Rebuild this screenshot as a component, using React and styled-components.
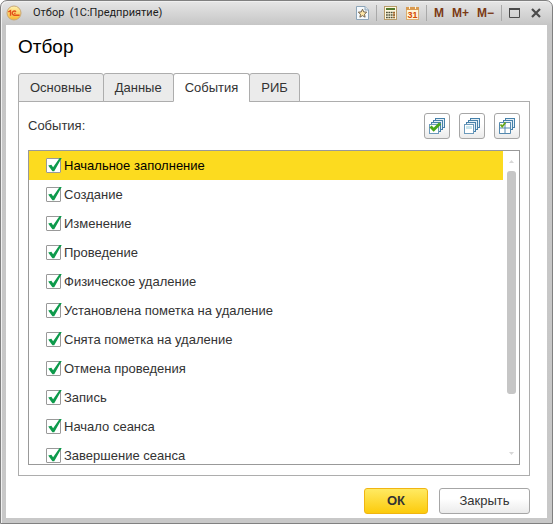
import React, { useState } from "react";
import styled, { createGlobalStyle, css } from "styled-components";

const GlobalStyle = createGlobalStyle`
  *, *::before, *::after { box-sizing: border-box; }
  body {
    margin: 0;
    background: #fff;
    color: #333;
    font: 13px/16px "Liberation Sans", Arial, sans-serif;
  }
  button, input { font: inherit; color: inherit; }
`;

const Window = styled.div`
  display: flex;
  flex-direction: column;
  height: 100vh;
  padding: 0 5px 5px;
  border: 1px solid #808080;
  border-radius: 7px 7px 0 0;
  background: linear-gradient(#e6e6e6, #c6c6c6 24px, #c8c8c8);
  box-shadow: inset 1px 1px 0 #f0f0f0;
`;

const TitleBar = styled.header`
  display: flex;
  flex: none;
  align-items: center;
  height: 24px;
`;

const WindowTitle = styled.span`
  flex: 1;
  margin-left: 11px;
  color: #1c1c1c;
  font: 11px/16px Roboto, sans-serif;
  white-space: pre;
`;

const ToolGroup = styled.div`
  display: flex;
  align-items: center;
  height: 16px;
  gap: ${(p) => p.$gap}px;
  padding: 0 7px;
  border-left: ${(p) => (p.$divided ? "1px solid #a9a9a9" : "0")};

  &:last-child { padding-right: 6px; }
`;

const TitleButton = styled.button`
  display: flex;
  align-items: center;
  justify-content: center;
  height: 16px;
  padding: 0;
  border: 0;
  background: none;
  color: #7b3a14;
  font: bold 12px/16px "Liberation Sans", Arial, sans-serif;
`;

const Content = styled.main`
  display: flex;
  flex: 1;
  flex-direction: column;
  min-height: 0;
  padding: 11px 17px 4px 12px;
  background: #fff;
`;

const Heading = styled.h1`
  margin: 0 0 15px;
  color: #000;
  font: 19px/22px "Liberation Sans", Arial, sans-serif;
`;

const Tabs = styled.div`
  display: flex;
  position: relative;
  z-index: 1;
`;

const Tab = styled.button`
  height: 29px;
  margin: 0 -1px -1px 0;
  padding: 0 11px;
  border: 1px solid #adadad;
  border-radius: 3px 3px 0 0;
  background: #ebebeb;

  ${(p) => p.$active && css`
    border-bottom-color: #fff;
    background: #fff;
  `}
`;

const Panel = styled.section`
  display: flex;
  flex: 1;
  flex-direction: column;
  min-height: 0;
  padding: 11px 9px 10px;
  border: 1px solid #adadad;
`;

const PanelBar = styled.div`
  display: flex;
  flex: none;
  align-items: center;
  justify-content: space-between;
  margin-bottom: 11px;
`;

const IconButtons = styled.div`
  display: flex;
  gap: 9px;
`;

const buttonFace = css`
  border: 1px solid #a6a6a6;
  border-radius: 3px;
  background: linear-gradient(#fff 40%, #ebebeb);
`;

const IconButton = styled.button`
  ${buttonFace}
  display: flex;
  align-items: center;
  justify-content: center;
  width: 26px;
  height: 26px;
  padding: 0;
`;

const ListBox = styled.div`
  display: flex;
  flex: 1;
  min-height: 0;
  border: 1px solid #999;
`;

const List = styled.ul`
  flex: 1;
  margin: 0;
  padding: 0;
  overflow-y: auto;
  scrollbar-width: none;
  list-style: none;
`;

const Row = styled.li`
  height: 29px;
  background: ${(p) => (p.$selected ? "#fcdb1f" : "#fff")};
  color: ${(p) => (p.$selected ? "#000" : "#333")};
`;

const RowLabel = styled.label`
  display: flex;
  align-items: center;
  gap: 3px;
  height: 29px;
  padding-left: 17px;
`;

const CheckFrame = styled.span`
  display: grid;
  width: 15px;
  height: 15px;

  > * { grid-area: 1 / 1; }
`;

const CheckBox = styled.input`
  width: 15px;
  height: 15px;
  margin: 0;
  border: 1px solid #999;
  border-radius: 1px;
  appearance: none;
  background: #fff;

  & + svg { visibility: hidden; overflow: visible; pointer-events: none; }
  &:checked + svg { visibility: visible; }
`;

const ScrollTrack = styled.div`
  display: flex;
  flex: none;
  flex-direction: column;
  align-items: center;
  width: 16px;
  padding: 8px 0;
`;

const ScrollThumb = styled.div`
  flex: 0 0 75%;
  width: 9px;
  margin: 8px 0 auto;
  border-radius: 3px;
  background: #c6c6c6;
`;

const Footer = styled.footer`
  display: flex;
  flex: none;
  justify-content: flex-end;
  gap: 11px;
  padding-top: 12px;
`;

const ActionButton = styled.button`
  ${buttonFace}
  width: 91px;
  height: 26px;
  padding: 0;

  ${(p) => p.$primary && css`
    width: 64px;
    border-color: #f0b512;
    background: linear-gradient(#ffea62, #fccb0c);
    font-weight: bold;
  `}
`;

const LogoIcon = () => (
  <svg width="16" height="16" viewBox="0 0 16 16" aria-hidden="true">
    <defs>
      <linearGradient id="logoFace" x1="0" y1="0" x2="0" y2="1">
        <stop offset="0" stopColor="#fff3b0" />
        <stop offset="1" stopColor="#f9b52c" />
      </linearGradient>
    </defs>
    <circle cx="8" cy="8" r="7" fill="url(#logoFace)" stroke="#c9a878" />
    <path d="M2.3 6.8 4.5 5.6V10.8M10 6.8A2.1 2.1 0 1 0 8.2 10.2H13.6M8.2 8.4H9.5" fill="none" stroke="#e2501b" strokeWidth="1.4" />
  </svg>
);

const FavoriteIcon = () => (
  <svg width="13" height="14" viewBox="0 0 13 14" aria-hidden="true">
    <path d="M.5.5H9L12.5 4V13.5H.5Z" fill="#f5f9fc" stroke="#8da5b8" />
    <path d="M9 .5V4H12.5" fill="#d9e6ef" stroke="#8da5b8" />
    <path d="m6.5 3.2 1.2 2.7 3 .3-2.2 2 .6 3-2.6-1.6-2.6 1.6.6-3-2.2-2 3-.3Z" fill="#ffe7a8" stroke="#75644c" />
  </svg>
);

const CalculatorIcon = () => (
  <svg width="13" height="14" viewBox="0 0 13 14" aria-hidden="true">
    <rect x=".5" y=".5" width="12" height="13" fill="#fff8df" stroke="#b79b6a" />
    <rect x="2" y="2" width="9" height="2" fill="#52792c" />
    <path d="M2 6.5h9M2 9h9M2 11.5h9" stroke="#4f5138" strokeWidth="1.4" strokeDasharray="1.8 .6" />
    <path d="M10 6v6" stroke="#bd6b26" strokeWidth="1.5" strokeDasharray="1.8 .7" />
  </svg>
);

const CalendarIcon = () => (
  <svg width="13" height="14" viewBox="0 0 13 14" aria-hidden="true">
    <rect x=".5" y="1.5" width="12" height="12" fill="#fff5d9" stroke="#d8ad74" />
    <path d="M0 2.5h13" stroke="#d99a50" strokeWidth="3" />
    <path d="M3.5 0v3M9.5 0v3" stroke="#fff2d5" />
    <text x="6.5" y="12" textAnchor="middle" fontFamily="Liberation Sans, sans-serif" fontSize="9" fill="#d64a03">31</text>
  </svg>
);

const MaximizeIcon = () => (
  <svg width="11" height="10" viewBox="0 0 11 10" aria-hidden="true">
    <path d="M.5 1v8.5h10V1" fill="none" stroke="#4a4a4a" />
    <path d="M0 1h11" stroke="#4a4a4a" strokeWidth="2" />
  </svg>
);

const CloseIcon = () => (
  <svg width="10" height="10" viewBox="0 0 10 10" aria-hidden="true">
    <path d="m1 1 8 8M9 1 1 9" stroke="#4a4a4a" strokeWidth="2.2" />
  </svg>
);

const SheetsIcon = ({ kind }) => (
  <svg width="16" height="16" viewBox="0 0 16 16" aria-hidden="true">
    <g fill="#e3eff6" stroke="#4580aa">
      <rect x="6.5" y=".5" width="9" height="9" />
      <rect x="4.5" y="2.5" width="9" height="9" />
      <rect x="2.5" y="4.5" width="9" height="9" />
      <rect x=".5" y="6.5" width="9" height="9" fill="#fff" stroke="#6c9abb" />
    </g>
    {kind === "check" && (
      <path d="m1.5 8.5 3.2 3.2L11 5.5" fill="none" stroke="#46a51a" strokeWidth="3" />
    )}
    {kind === "clear" && <path d="M2 8h6v3H2Z" fill="#c9e5ec" />}
    {kind === "invert" && (
      <>
        <path d="M.5 4.5h11v11H.5ZM6 4.5v11M.5 10h11" fill="#fff" stroke="#5489af" />
        <path d="m1.5 6.5 1.7 2L6.5 4.5" fill="none" stroke="#67a718" strokeWidth="1.8" />
      </>
    )}
  </svg>
);

const CheckMark = () => (
  <svg width="15" height="15" viewBox="0 0 15 15" aria-hidden="true">
    <path d="M2.2 7.4 5.4 6.8 7.1 9.2 13.6 0H15.7L8.2 13.2H6.4Z" fill="#0d9a4b" />
  </svg>
);

const Arrow = ({ down }) => (
  <svg width="5" height="4" viewBox="0 0 5 4" aria-hidden="true">
    <path d={down ? "M0 0h5L2.5 3Z" : "M0 4h5L2.5 1Z"} fill="#d7d7d7" />
  </svg>
);

const tabs = ["Основные", "Данные", "События", "РИБ"];
const events = [
  "Начальное заполнение",
  "Создание",
  "Изменение",
  "Проведение",
  "Физическое удаление",
  "Установлена пометка на удаление",
  "Снята пометка на удаление",
  "Отмена проведения",
  "Запись",
  "Начало сеанса",
  "Завершение сеанса",
];

export default function App() {
  const [activeTab, setActiveTab] = useState("События");
  const [checked, setChecked] = useState(() => events.map(() => true));

  const toggle = (index) =>
    setChecked((values) => values.map((value, i) => (i === index ? !value : value)));

  return (
    <>
      <GlobalStyle />
      <Window>
        <TitleBar>
          <LogoIcon />
          <WindowTitle>{"Отбор  (1С:Предприятие)"}</WindowTitle>
          <ToolGroup $gap={0}>
            <TitleButton aria-label="Избранное"><FavoriteIcon /></TitleButton>
          </ToolGroup>
          <ToolGroup $gap={9} $divided>
            <TitleButton aria-label="Калькулятор"><CalculatorIcon /></TitleButton>
            <TitleButton aria-label="Календарь"><CalendarIcon /></TitleButton>
          </ToolGroup>
          <ToolGroup $gap={8} $divided>
            <TitleButton>M</TitleButton>
            <TitleButton>M+</TitleButton>
            <TitleButton>M−</TitleButton>
          </ToolGroup>
          <ToolGroup $gap={11} $divided>
            <TitleButton aria-label="Развернуть"><MaximizeIcon /></TitleButton>
            <TitleButton aria-label="Закрыть окно"><CloseIcon /></TitleButton>
          </ToolGroup>
        </TitleBar>
        <Content>
          <Heading>Отбор</Heading>
          <Tabs role="tablist">
            {tabs.map((name) => (
              <Tab
                key={name}
                role="tab"
                aria-selected={name === activeTab}
                $active={name === activeTab}
                onClick={() => setActiveTab(name)}
              >
                {name}
              </Tab>
            ))}
          </Tabs>
          <Panel role="tabpanel">
            <PanelBar>
              <span>События:</span>
              <IconButtons>
                <IconButton aria-label="Установить все" onClick={() => setChecked(events.map(() => true))}>
                  <SheetsIcon kind="check" />
                </IconButton>
                <IconButton aria-label="Снять все" onClick={() => setChecked(events.map(() => false))}>
                  <SheetsIcon kind="clear" />
                </IconButton>
                <IconButton aria-label="Инвертировать" onClick={() => setChecked((v) => v.map((x) => !x))}>
                  <SheetsIcon kind="invert" />
                </IconButton>
              </IconButtons>
            </PanelBar>
            <ListBox>
              <List>
                {events.map((name, index) => (
                  <Row key={name} $selected={index === 0}>
                    <RowLabel>
                      <CheckFrame>
                        <CheckBox type="checkbox" checked={checked[index]} onChange={() => toggle(index)} />
                        <CheckMark />
                      </CheckFrame>
                      {name}
                    </RowLabel>
                  </Row>
                ))}
              </List>
              <ScrollTrack aria-hidden="true">
                <Arrow />
                <ScrollThumb />
                <Arrow down />
              </ScrollTrack>
            </ListBox>
          </Panel>
          <Footer>
            <ActionButton $primary>ОК</ActionButton>
            <ActionButton>Закрыть</ActionButton>
          </Footer>
        </Content>
      </Window>
    </>
  );
}
